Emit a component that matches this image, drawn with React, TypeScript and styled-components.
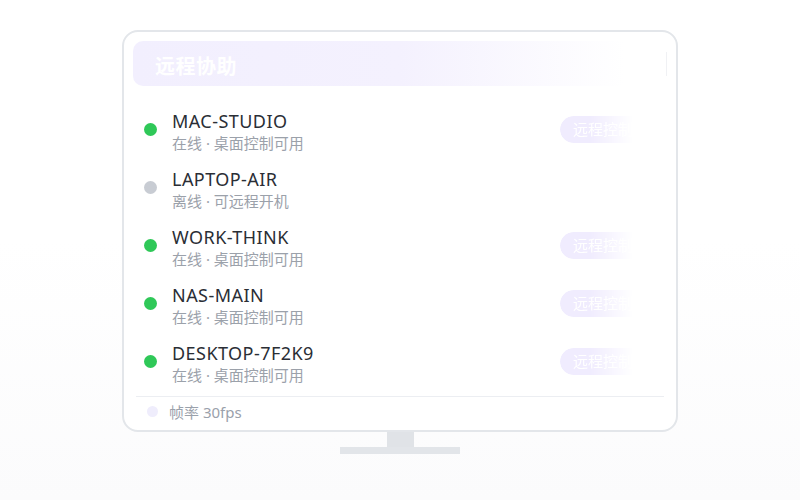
import styled, { createGlobalStyle } from "styled-components";

interface Device {
  name: string;
  online: boolean;
  status: string;
}

const devices: Device[] = [
  { name: "MAC-STUDIO", online: true, status: "在线 · 桌面控制可用" },
  { name: "LAPTOP-AIR", online: false, status: "离线 · 可远程开机" },
  { name: "WORK-THINK", online: true, status: "在线 · 桌面控制可用" },
  { name: "NAS-MAIN", online: true, status: "在线 · 桌面控制可用" },
  { name: "DESKTOP-7F2K9", online: true, status: "在线 · 桌面控制可用" },
];

export default function App() {
  return (
    <>
      <GlobalStyle />
      <Page>
        <Monitor>
          <Header>
            <Title>远程协助</Title>
            <HeaderEdge />
          </Header>
          <List>
            {devices.map((d) => (
              <Row key={d.name}>
                <Dot $online={d.online} />
                <Info>
                  <Name>{d.name}</Name>
                  <Status>{d.status}</Status>
                </Info>
                {d.online && <ControlBtn>远程控制</ControlBtn>}
              </Row>
            ))}
          </List>
          <Divider />
          <Footer>
            <FooterDot />
            <FooterText>帧率 30fps</FooterText>
          </Footer>
        </Monitor>
        <Neck />
        <Base />
      </Page>
    </>
  );
}

const GlobalStyle = createGlobalStyle`
  html, body {
    margin: 0;
    padding: 0;
  }
  body {
    font-family: "Noto Sans", "Noto Sans CJK SC", sans-serif;
    background: linear-gradient(#ffffff 0%, #ffffff 48%, #fbfbfc 100%);
    min-height: 500px;
  }
`;

const Page = styled.div`
  width: 800px;
  height: 500px;
  display: flex;
  flex-direction: column;
  align-items: center;
  padding-top: 30px;
  box-sizing: border-box;
`;

const Monitor = styled.div`
  width: 556px;
  height: 402px;
  box-sizing: border-box;
  border: 2px solid #e3e6ea;
  border-radius: 16px;
  background: #ffffff;
  padding: 9px 9px 4px;
  display: flex;
  flex-direction: column;
`;

const Header = styled.div`
  height: 45px;
  flex-shrink: 0;
  border-radius: 10px;
  background: linear-gradient(to right, #f2effe 0%, #f4f1fe 50%, #ffffff 92%);
  display: flex;
  align-items: center;
  justify-content: space-between;
  padding-left: 22px;
`;

const Title = styled.div`
  color: #ffffff;
  font-size: 20px;
  font-weight: 700;
  letter-spacing: 0.5px;
  padding-top: 3px;
`;

const HeaderEdge = styled.div`
  width: 1px;
  height: 24px;
  background: #f0f1f4;
`;

const List = styled.div`
  flex-shrink: 0;
  padding-top: 17px;
  display: flex;
  flex-direction: column;
`;

const Row = styled.div`
  height: 58px;
  display: flex;
  align-items: center;
  padding-left: 11px;
  padding-right: 21px;
`;

const Dot = styled.div<{ $online: boolean }>`
  width: 13px;
  height: 13px;
  border-radius: 50%;
  flex-shrink: 0;
  margin-top: -6px;
  background: ${(p) => (p.$online ? "#2fc858" : "#c8ccd3")};
`;

const Info = styled.div`
  flex: 1;
  margin-left: 15px;
  display: flex;
  flex-direction: column;
`;

const Name = styled.div`
  font-size: 18px;
  line-height: 22px;
  color: #2a2e35;
  letter-spacing: 0.45px;
`;

const Status = styled.div`
  font-size: 15px;
  line-height: 21px;
  color: #9ba1aa;
  margin-top: 1px;
`;

const ControlBtn = styled.div`
  height: 27px;
  padding: 0 13px;
  margin-top: -6px;
  border-radius: 14px;
  background: #f0ecfe;
  color: #ffffff;
  font-size: 15px;
  line-height: 27px;
  -webkit-mask-image: linear-gradient(to right, #000 35%, transparent 85%);
  mask-image: linear-gradient(to right, #000 35%, transparent 85%);
`;

const Divider = styled.div`
  flex-shrink: 0;
  height: 1px;
  margin: 3px 3px 0;
  background: #eceef2;
`;

const Footer = styled.div`
  flex: 1;
  display: flex;
  align-items: center;
  padding-left: 14px;
`;

const FooterDot = styled.div`
  width: 11px;
  height: 11px;
  border-radius: 50%;
  background: #efedfc;
`;

const FooterText = styled.div`
  margin-left: 11px;
  font-size: 15px;
  color: #9aa1ab;
`;

const Neck = styled.div`
  width: 27px;
  height: 15px;
  background: #e0e3e7;
`;

const Base = styled.div`
  width: 120px;
  height: 7px;
  background: #e2e5e9;
`;
